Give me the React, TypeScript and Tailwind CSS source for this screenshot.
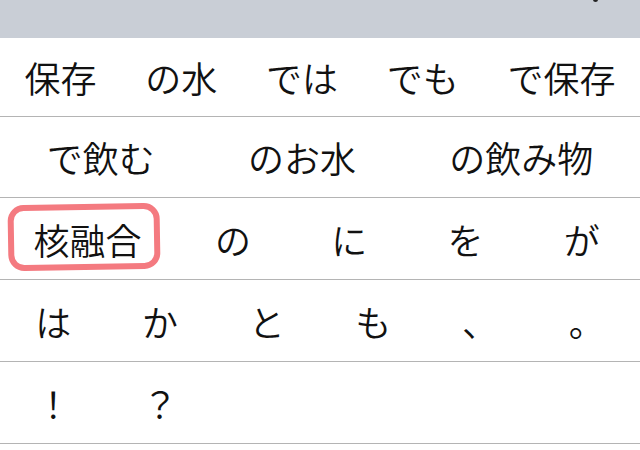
const row1 = ["保存", "の水", "では", "でも", "で保存"];
const row2 = ["で飲む", "のお水", "の飲み物"];
const row3 = ["の", "に", "を", "が"];
const row4 = ["は", "か", "と", "も", "、", "。"];
const row5 = ["！", "？", "", "", "", ""];

export default function App() {
  return (
    <div
      className="w-[640px] h-[450px] overflow-hidden bg-white text-[36px] text-[#111] leading-none font-[350]"
      style={{ fontFamily: '"Noto Sans CJK JP", "Noto Sans", sans-serif' }}
    >
      <div className="h-[38px] bg-[#c9ced6] relative">
        <div className="absolute left-[593px] top-[-3px] w-[5px] h-[5px] rounded-full bg-[#222]" />
      </div>

      <div className="flex h-[79px] items-center border-b border-[#b4b4b4]">
        {row1.map((w) => (
          <div key={w} className="flex-auto text-center">{w}</div>
        ))}
      </div>

      <div className="flex h-[81px] items-center border-b border-[#b4b4b4]">
        {row2.map((w) => (
          <div key={w} className="flex-auto text-center">{w}</div>
        ))}
      </div>

      <div className="flex h-[82px] items-center border-b border-[#b4b4b4]">
        <div className="relative w-[175px] h-full shrink-0 flex items-center justify-center">
          <span>核融合</span>
          <div className="absolute left-[8px] top-[6px] w-[152px] h-[66px] rounded-[16px] border-[6px] border-[#f47a80] -rotate-1" />
        </div>
        {row3.map((w) => (
          <div key={w} className="flex-1 text-center">{w}</div>
        ))}
      </div>

      <div className="grid grid-cols-6 h-[82px] items-center border-b border-[#b4b4b4]">
        {row4.map((w) => (
          <div key={w} className="text-center">{w}</div>
        ))}
      </div>

      <div className="grid grid-cols-6 h-[82px] items-center border-b border-[#b4b4b4]">
        {row5.map((w, i) => (
          <div key={i} className="text-center">{w}</div>
        ))}
      </div>
    </div>
  );
}
